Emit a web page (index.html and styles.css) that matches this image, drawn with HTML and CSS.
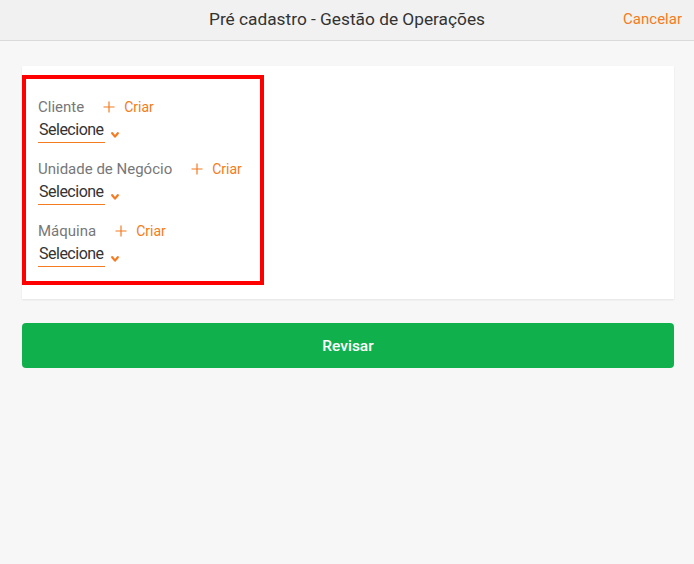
FILE: index.html
```html
<!DOCTYPE html>
<html lang="pt">
<head>
<meta charset="utf-8">
<title>Pré cadastro</title>
<link rel="stylesheet" href="styles.css">
</head>
<body>
<header class="topbar">
  <div class="title">Pré cadastro - Gestão de Operações</div>
  <a class="cancel">Cancelar</a>
</header>
<main class="content">
  <section class="card">
    <div class="fields">
      <div class="field">
        <div class="label-row">
          <span class="label">Cliente</span>
          <span class="create"><svg class="plus" viewBox="0 0 12 12"><path d="M6 0.5V11.5M0.5 6H11.5"/></svg>Criar</span>
        </div>
        <div class="select-row">
          <span class="select">Selecione</span>
          <svg class="chev" viewBox="0 0 8 6"><path d="M1.2 1.2L4 4.6L6.8 1.2"/></svg>
        </div>
      </div>
      <div class="field">
        <div class="label-row">
          <span class="label">Unidade de Negócio</span>
          <span class="create"><svg class="plus" viewBox="0 0 12 12"><path d="M6 0.5V11.5M0.5 6H11.5"/></svg>Criar</span>
        </div>
        <div class="select-row">
          <span class="select">Selecione</span>
          <svg class="chev" viewBox="0 0 8 6"><path d="M1.2 1.2L4 4.6L6.8 1.2"/></svg>
        </div>
      </div>
      <div class="field">
        <div class="label-row">
          <span class="label">Máquina</span>
          <span class="create"><svg class="plus" viewBox="0 0 12 12"><path d="M6 0.5V11.5M0.5 6H11.5"/></svg>Criar</span>
        </div>
        <div class="select-row">
          <span class="select">Selecione</span>
          <svg class="chev" viewBox="0 0 8 6"><path d="M1.2 1.2L4 4.6L6.8 1.2"/></svg>
        </div>
      </div>
    </div>
  </section>
  <button class="review">Revisar</button>
</main>
</body>
</html>
```
FILE: styles.css
```css
* { box-sizing: border-box; }
html, body { margin: 0; padding: 0; }
body {
  background: #f7f7f7;
  font-family: Roboto, "Liberation Sans", sans-serif;
  width: 694px;
  height: 564px;
  overflow: hidden;
}
.topbar {
  position: relative;
  height: 41px;
  background: #f1f1f1;
  border-bottom: 1px solid #dadada;
  display: flex;
  align-items: center;
  justify-content: center;
}
.title {
  font-size: 17.3px;
  color: #333;
  line-height: 20px;
  margin-top: -2px;
}
.cancel {
  position: absolute;
  right: 12px;
  top: 9px;
  font-size: 15px;
  line-height: 20px;
  color: #f47b20;
}
.content {
  padding: 25px 20px 0 22px;
}
.card {
  background: #fff;
  padding: 9px 0 14px 0;
  box-shadow: 0 1px 2px rgba(0,0,0,0.08);
}
.fields {
  width: 242px;
  border: 4px solid #ff0000;
  padding: 18px 0 14px 12px;
  display: flex;
  flex-direction: column;
  gap: 16px;
}
.label-row {
  display: flex;
  align-items: center;
  height: 20px;
}
.label {
  font-size: 15px;
  color: #777;
  line-height: 20px;
}
.create {
  display: flex;
  align-items: center;
  margin-left: 19px;
  font-size: 14px;
  color: #f47b20;
  line-height: 20px;
}
.plus {
  width: 12px;
  height: 12px;
  margin-right: 9px;
  fill: none;
  stroke: #f47b20;
  stroke-width: 1.2;
}
.select-row {
  display: flex;
  align-items: center;
  margin-top: 3px;
}
.select {
  font-size: 16px;
  letter-spacing: -0.5px;
  line-height: 20px;
  color: #333;
  padding: 0 1px 2px 1px;
  border-bottom: 1px solid #f47b20;
}
.chev {
  width: 8px;
  height: 6px;
  margin-left: 6px;
  margin-top: 7px;
  fill: none;
  stroke: #f47b20;
  stroke-width: 2.2;
  stroke-linecap: round;
  stroke-linejoin: round;
}
.review {
  display: block;
  width: 100%;
  height: 45px;
  margin-top: 24px;
  border: none;
  border-radius: 4px;
  background: #10b04d;
  color: #fff;
  font-family: Roboto, "Liberation Sans", sans-serif;
  font-size: 15.5px;
  font-weight: 500;
}
```
